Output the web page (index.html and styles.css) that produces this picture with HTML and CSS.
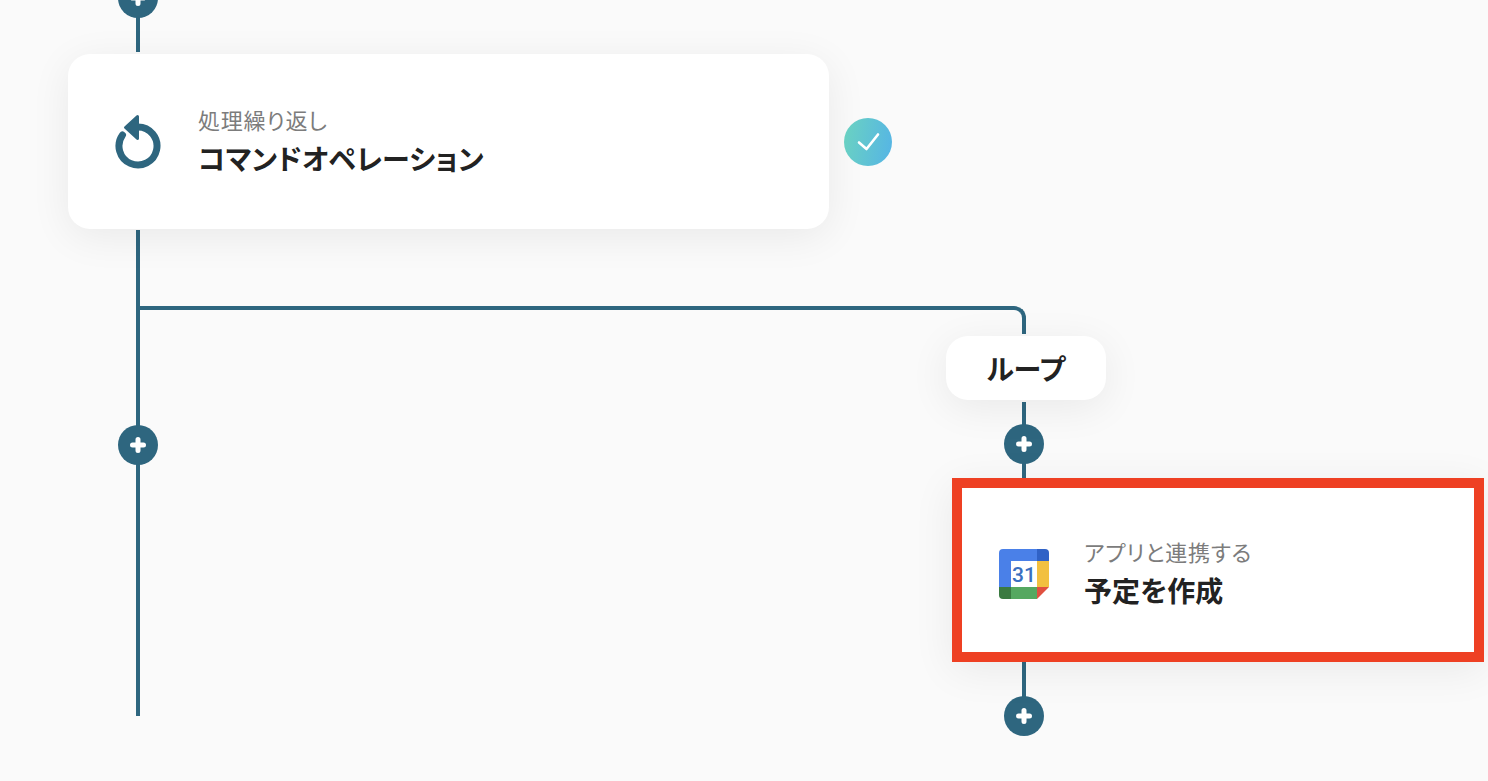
FILE: index.html
```html
<!DOCTYPE html>
<html lang="ja">

<head>
    <meta charset="UTF-8">
    <meta name="viewport" content="width=device-width, initial-scale=1.0">
    <title>フロー</title>
    <link rel="stylesheet" href="styles.css">
</head>

<body>
    <div class="flow">
        <!-- connector lines -->
        <div class="line line-top"></div>
        <div class="line line-main"></div>
        <div class="branch"></div>
        <div class="line line-loop"></div>
        <div class="line line-end"></div>

        <!-- add buttons -->
        <div class="add add-top"><svg viewBox="0 0 40 40"><path d="M20 14.500v11M14.500 20h11" /></svg></div>
        <div class="add add-main"><svg viewBox="0 0 40 40"><path d="M20 14.500v11M14.500 20h11" /></svg></div>
        <div class="add add-loop"><svg viewBox="0 0 40 40"><path d="M20 14.500v11M14.500 20h11" /></svg></div>
        <div class="add add-end"><svg viewBox="0 0 40 40"><path d="M20 14.500v11M14.500 20h11" /></svg></div>

        <!-- command operation -->
        <div class="card card-repeat">
            <svg class="icon-repeat" viewBox="0 0 46 54">
                <path class="repeat-ring" d="M7.500 20A19 19 0 1 0 23 12" />
                <path class="repeat-arrow" d="M22.500 1.500 10.500 12.500 22.500 23.500Z" />
            </svg>
            <div class="card-text">
                <div class="card-label">処理繰り返し</div>
                <div class="card-title">コマンドオペレーション</div>
            </div>
        </div>

        <div class="check">
            <svg viewBox="0 0 48 48"><path d="M15 24.500 22.500 31 34 16.500" /></svg>
        </div>

        <div class="pill">ループ</div>

        <!-- calendar step -->
        <div class="card card-calendar">
            <svg class="icon-calendar" viewBox="0 0 50 50">
                <path fill="#4a80e8" d="M4 0h34v12H12v26H0V4a4 4 0 0 1 4-4z" />
                <path fill="#3062c6" d="M38 0h8a4 4 0 0 1 4 4v8H38z" />
                <rect fill="#fff" x="12" y="12" width="26" height="26" />
                <rect fill="#f2c040" x="38" y="12" width="12" height="26" />
                <rect fill="#55a860" x="12" y="38" width="26" height="12" />
                <path fill="#3a7a40" d="M0 38h12v12H4a4 4 0 0 1-4-4z" />
                <path fill="#e05040" d="M38 38h12L38 50z" />
                <text class="calendar-day" x="25" y="33">31</text>
            </svg>
            <div class="card-text">
                <div class="card-label">アプリと連携する</div>
                <div class="card-title">予定を作成</div>
            </div>
        </div>
    </div>
</body>

</html>
```

FILE: styles.css
```css
* {
    box-sizing: border-box;
}

body {
    margin: 0;
    background-color: #fafafa;
    font-family: "Noto Sans CJK JP", "Noto Sans", sans-serif;
    font-feature-settings: "palt";
    color: #222222;
    overflow: hidden;
}

.flow {
    position: relative;
    width: 1488px;
    height: 781px;
    overflow: hidden;
}

.line {
    position: absolute;
    width: 4px;
    background-color: #2e667f;
}

.line-top {
    left: 136px;
    top: 0;
    height: 52px;
}

.line-main {
    left: 136px;
    top: 230px;
    height: 486px;
}

.line-loop {
    left: 1022px;
    top: 402px;
    height: 76px;
}

.line-end {
    left: 1022px;
    top: 662px;
    height: 40px;
}

.branch {
    position: absolute;
    left: 138px;
    top: 306px;
    width: 888px;
    height: 28px;
    border-top: 4px solid #2e667f;
    border-right: 4px solid #2e667f;
    border-top-right-radius: 12px;
}

.add {
    position: absolute;
    width: 40px;
    height: 40px;
    border-radius: 50%;
    background-color: #2e667f;
}

.add svg {
    display: block;
    width: 40px;
    height: 40px;
}

.add path {
    fill: none;
    stroke: #ffffff;
    stroke-width: 5;
    stroke-linecap: round;
}

.add-top {
    left: 118px;
    top: -22px;
}

.add-main {
    left: 118px;
    top: 425px;
}

.add-loop {
    left: 1004px;
    top: 424px;
}

.add-end {
    left: 1004px;
    top: 696px;
}

.card {
    position: absolute;
    display: flex;
    align-items: center;
    background-color: #ffffff;
    box-shadow: 0 8px 40px rgba(0, 0, 0, 0.07);
}

.card-repeat {
    left: 68px;
    top: 54px;
    width: 761px;
    height: 175px;
    padding-left: 47px;
    gap: 37px;
    border-radius: 22px;
}

.card-calendar {
    left: 952px;
    top: 478px;
    width: 532px;
    height: 184px;
    padding: 8px 0 0 37px;
    gap: 35px;
    border: 10px solid #ee4023;
}

.icon-repeat {
    flex: none;
    width: 46px;
    height: 54px;
}

.repeat-ring {
    fill: none;
    stroke: #2e667f;
    stroke-width: 7;
    stroke-linecap: round;
}

.repeat-arrow {
    fill: #2e667f;
    stroke: #2e667f;
    stroke-width: 3;
    stroke-linejoin: round;
}

.icon-calendar {
    flex: none;
    width: 50px;
    height: 50px;
}

.calendar-day {
    font-family: Roboto, sans-serif;
    font-size: 21px;
    font-weight: 500;
    fill: #3a6fc0;
    text-anchor: middle;
}

.card-text {
    display: flex;
    flex-direction: column;
    gap: 8px;
    margin-top: -2px;
}

.card-label {
    font-size: 22px;
    line-height: 26px;
    font-weight: 400;
    letter-spacing: 0.8px;
    color: #7c7c7c;
}

.card-title {
    font-size: 28px;
    line-height: 36px;
    font-weight: 700;
    letter-spacing: 0.1px;
    color: #222222;
}

.check {
    position: absolute;
    left: 844px;
    top: 118px;
    width: 48px;
    height: 48px;
    border-radius: 50%;
    background: linear-gradient(100deg, #6bd3c0, #55b4e6);
}

.check svg {
    display: block;
    width: 48px;
    height: 48px;
}

.check path {
    fill: none;
    stroke: #ffffff;
    stroke-width: 2.600;
    stroke-linecap: round;
    stroke-linejoin: round;
}

.pill {
    position: absolute;
    left: 946px;
    top: 336px;
    width: 160px;
    height: 64px;
    display: flex;
    align-items: center;
    justify-content: center;
    border-radius: 22px;
    background-color: #ffffff;
    box-shadow: 0 8px 40px rgba(0, 0, 0, 0.07);
    font-size: 28px;
    font-weight: 700;
}
```
